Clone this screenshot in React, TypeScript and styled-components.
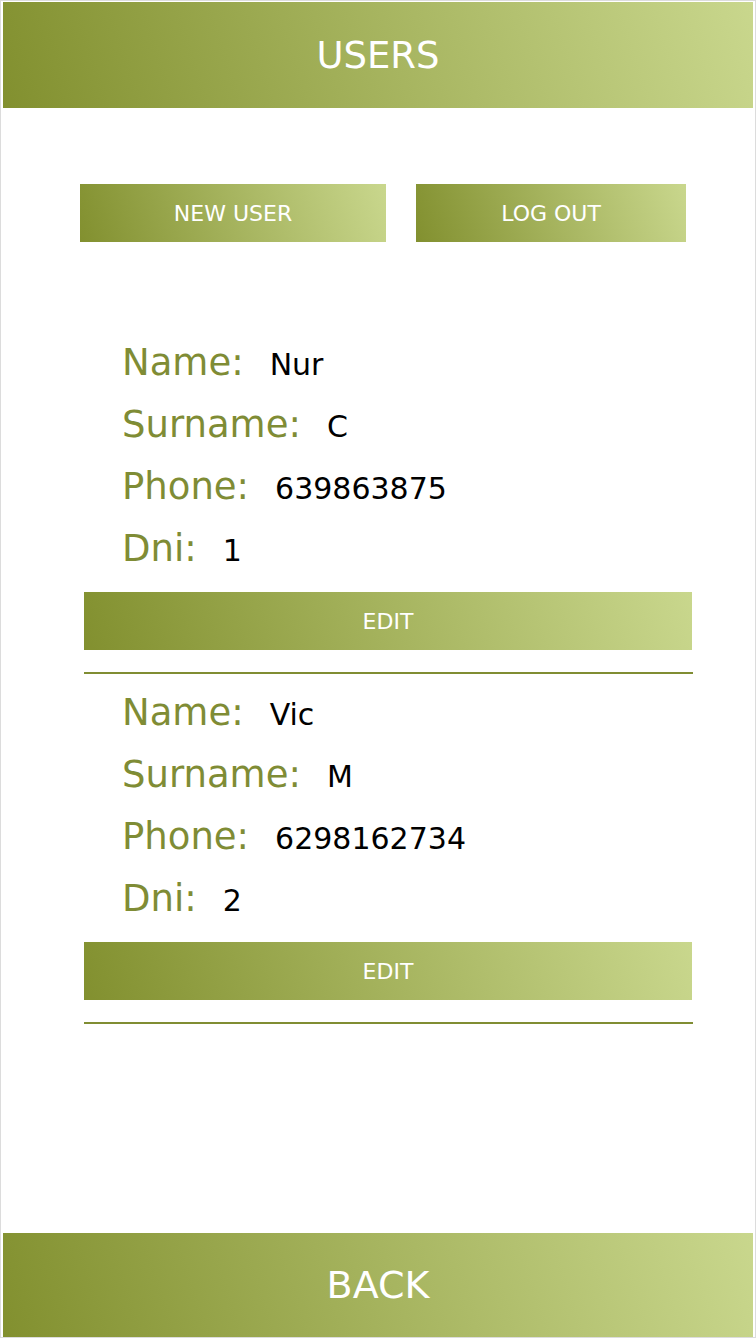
import React from "react";
import styled, { createGlobalStyle } from "styled-components";

const users = [
  { name: "Nur", surname: "C", phone: "639863875", dni: "1" },
  { name: "Vic", surname: "M", phone: "6298162734", dni: "2" },
];

function App() {
  return (
    <>
      <GlobalStyle />
      <Frame>
        <TopBar>USERS</TopBar>
        <Main>
          <Actions>
            <ActionButton $width={306}>NEW USER</ActionButton>
            <ActionButton $width={270}>LOG OUT</ActionButton>
          </Actions>
          <UserList>
            {users.map((u) => (
              <UserCard key={u.dni}>
                <Field>
                  <Label>Name:</Label>
                  <Value>{u.name}</Value>
                </Field>
                <Field>
                  <Label>Surname:</Label>
                  <Value>{u.surname}</Value>
                </Field>
                <Field>
                  <Label>Phone:</Label>
                  <Value>{u.phone}</Value>
                </Field>
                <Field>
                  <Label>Dni:</Label>
                  <Value>{u.dni}</Value>
                </Field>
                <EditButton>EDIT</EditButton>
              </UserCard>
            ))}
          </UserList>
        </Main>
        <BottomBar>BACK</BottomBar>
      </Frame>
    </>
  );
}

const olive = "#82902f";
const pale = "#c9d78d";

const GlobalStyle = createGlobalStyle`
  html, body {
    margin: 0;
    padding: 0;
    background: #ffffff;
  }
  * {
    box-sizing: border-box;
  }
`;

const Frame = styled.div`
  width: 756px;
  height: 1338px;
  display: flex;
  flex-direction: column;
  padding: 1px 2px 0 2px;
  border: 1px solid #dcdcdc;
  font-family: "DejaVu Sans", sans-serif;
  background: #ffffff;
`;

const bar = `
  display: flex;
  align-items: center;
  justify-content: center;
  color: #ffffff;
  background: linear-gradient(72deg, ${olive}, ${pale});
`;

const TopBar = styled.div`
  ${bar}
  height: 106px;
  font-size: 37px;
`;

const Main = styled.div`
  flex: 1;
  display: flex;
  flex-direction: column;
  padding-top: 76px;
`;

const Actions = styled.div`
  display: flex;
  gap: 30px;
  padding-left: 77px;
`;

const ActionButton = styled.button<{ $width: number }>`
  ${bar}
  width: ${(p) => p.$width}px;
  height: 58px;
  border: none;
  padding: 0;
  font-family: inherit;
  font-size: 22px;
  cursor: pointer;
`;

const UserList = styled.div`
  display: flex;
  flex-direction: column;
  margin: 82px 0 0 81px;
  width: 609px;
`;

const UserCard = styled.div`
  display: flex;
  flex-direction: column;
  padding-top: 8px;
  padding-bottom: 22px;
  border-bottom: 2px solid #808d33;
`;

const Field = styled.div`
  display: flex;
  align-items: baseline;
  height: 62px;
  line-height: 62px;
  padding-left: 38px;
`;

const Label = styled.span`
  color: #7f8c35;
  font-size: 37px;
  margin-right: 26px;
`;

const Value = styled.span`
  color: #000000;
  font-size: 30px;
`;

const EditButton = styled.button`
  ${bar}
  width: 608px;
  height: 58px;
  margin-top: 12px;
  border: none;
  padding: 0;
  font-family: inherit;
  font-size: 22px;
  cursor: pointer;
`;

const BottomBar = styled.div`
  ${bar}
  height: 104px;
  font-size: 38px;
`;

export default App;
